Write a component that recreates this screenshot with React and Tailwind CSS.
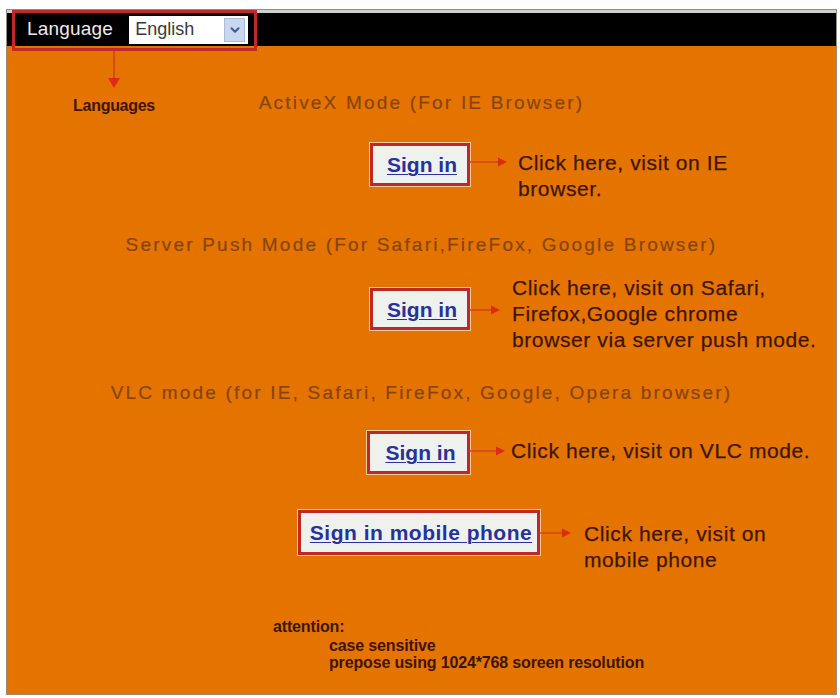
import { ChevronDown } from "lucide-react"

const ink = "text-[#3d1507] [-webkit-text-stroke:0.25px_#3d1507]"

function Arrow({ w }) {
  // thin red line ending in a small filled head
  return (
    <svg width={w} height="10" viewBox={`0 0 ${w} 10`} className="shrink-0">
      <line x1="0" y1="5" x2={w - 7} y2="5" stroke="#d8321c" strokeWidth="1.2" />
      <polygon points={`${w - 9},0.5 ${w},5 ${w - 9},9.5`} fill="#e02a18" />
    </svg>
  )
}

function SignIn({ label, w, h, size = "text-[21px]" }) {
  return (
    <div
      className="shrink-0 flex items-center justify-center border-[3px] border-[#bd2a26] bg-[#eef1ee] shadow-[0_0_0_1px_#f3c9a0]"
      style={{ width: w, height: h }}
    >
      <a href="#" className={`${size} leading-none font-bold underline underline-offset-2 decoration-1 text-[#27319a] pl-[4px]`}>
        {label}
      </a>
    </div>
  )
}

function Heading({ children, mt }) {
  return (
    <p className={`${mt} text-center text-[19px] leading-[22px] tracking-[2.2px] text-[#864510] [-webkit-text-stroke:0.2px_#864510]`}>
      {children}
    </p>
  )
}

export default function App() {
  return (
    <div className="min-h-screen bg-white pt-[9px] pl-[6px]" style={{ fontFamily: '"Liberation Sans", Arial, sans-serif' }}>
      <div className="relative w-[831px] h-[686px] border border-[#9c8a78] bg-[#e57300] flex flex-col">
        <div className="h-[3px] bg-[#cfcfcf]" />
        <div className="h-[33px] bg-black flex items-center">
          <span className="ml-[20px] text-[19px] tracking-[0.2px] text-[#ececec]">Language</span>
          <div className="ml-[16px] w-[119px] h-[28px] bg-white flex items-center justify-between pl-[6px] pr-[3px]">
            <span className="text-[18px] text-[#3a3a3a]">English</span>
            <span className="w-[21px] h-[24px] bg-[#c9d8ee] border border-[#a9bcd8] flex items-center justify-center">
              <ChevronDown size={14} strokeWidth={3.5} className="text-[#3c5f9c]" />
            </span>
          </div>
        </div>

        {/* annotation: red frame around the language picker */}
        <div className="absolute left-[5px] top-0 w-[245px] h-[41px] border-[3px] border-[#c1282b]" />

        {/* annotation: arrow down to the "Languages" label */}
        <div className="absolute left-[62px] top-[39px] w-[90px] flex flex-col items-center">
          <svg width="14" height="40" viewBox="0 0 14 40">
            <line x1="7" y1="2" x2="7" y2="30" stroke="#d8321c" strokeWidth="1.3" />
            <polygon points="1,29 13,29 7,39" fill="#e02a18" />
          </svg>
          <span className="mt-[9px] text-[16px] leading-[16px] font-bold tracking-[-0.3px] text-[#3d1507]">Languages</span>
        </div>

        <Heading mt="mt-[46px]">ActiveX Mode (For IE Browser)</Heading>

        <div className="mt-[29px] flex items-start pl-[363px]">
          <SignIn label="Sign in" w={100} h={43} />
          <div className="h-[43px] flex items-center pb-[6px]">
            <Arrow w={37} />
          </div>
          <p className={`ml-[11px] mt-[7px] text-[21px] leading-[26px] tracking-[0.6px] ${ink}`}>
            Click here, visit on IE<br />browser.
          </p>
        </div>

        <Heading mt="mt-[32px]">Server Push Mode (For Safari,FireFox, Google Browser)</Heading>

        <div className="mt-[19px] flex items-start pl-[363px]">
          <div className="mt-[13px]">
            <SignIn label="Sign in" w={100} h={42} />
          </div>
          <div className="mt-[30px]">
            <Arrow w={30} />
          </div>
          <p className={`ml-[12px] text-[21px] leading-[26px] tracking-[0.6px] ${ink}`}>
            Click here, visit on Safari,<br />Firefox,Google chrome<br />browser via server push mode.
          </p>
        </div>

        <Heading mt="mt-[29px]">VLC mode (for IE, Safari, FireFox, Google, Opera browser)</Heading>

        <div className="mt-[27px] flex items-start pl-[360px]">
          <SignIn label="Sign in" w={103} h={43} />
          <div className="h-[43px] flex items-center pb-[4px]">
            <Arrow w={35} />
          </div>
          <p className={`ml-[6px] mt-[7px] text-[21px] leading-[26px] tracking-[0.6px] ${ink}`}>
            Click here, visit on VLC mode.
          </p>
        </div>

        <div className="mt-[36px] flex items-start pl-[291px]">
          <SignIn label="Sign in mobile phone" w={242} h={45} size="text-[21px] tracking-[0.5px]" />
          <div className="h-[45px] flex items-center">
            <Arrow w={31} />
          </div>
          <p className={`ml-[13px] mt-[11px] text-[21px] leading-[26px] tracking-[0.6px] ${ink}`}>
            Click here, visit on<br />mobile phone
          </p>
        </div>

        <div className="mt-[45px] pl-[266px] text-[16px] leading-[17px] font-bold tracking-[-0.15px] text-[#3d1507]">
          <p>attention:</p>
          <p className="pl-[56px] mt-[2px]">case sensitive</p>
          <p className="pl-[56px]">prepose using 1024*768 soreen resolution</p>
        </div>
      </div>
    </div>
  )
}
